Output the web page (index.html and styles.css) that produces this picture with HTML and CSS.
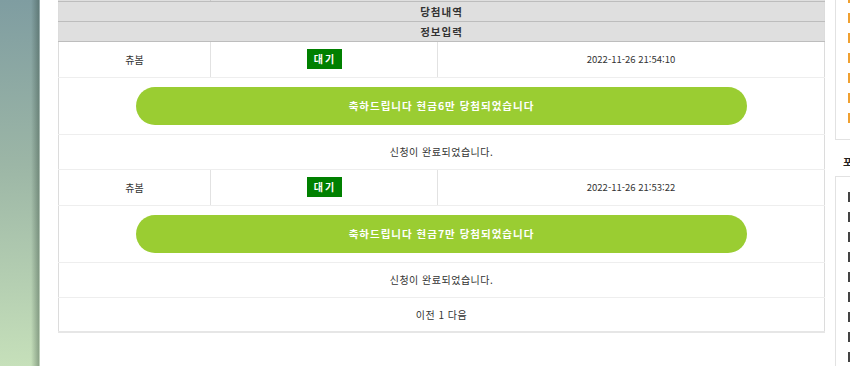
FILE: index.html
```html
<!DOCTYPE html>
<html lang="ko">
<head>
    <meta charset="UTF-8">
    <title>당첨내역</title>
    <link rel="stylesheet" href="styles.css">
</head>
<body>
    <div class="side-bg"></div>
    <div class="page">
        <div class="content">
            <table class="result-table">
                <colgroup>
                    <col class="w-name">
                    <col class="w-state">
                    <col class="w-date">
                </colgroup>
                <tr class="prev-row">
                    <td class="col-name"></td>
                    <td colspan="2"></td>
                </tr>
                <tr class="head-row">
                    <th colspan="3">당첨내역</th>
                </tr>
                <tr class="head-row">
                    <th colspan="3">정보입력</th>
                </tr>

                <tr class="data-row">
                    <td class="col-name">츄봄</td>
                    <td class="col-state"><span class="badge">대기</span></td>
                    <td class="col-date">2022-11-26 21:54:10</td>
                </tr>
                <tr class="prize-row">
                    <td colspan="3"><div class="prize">축하드립니다 현금6만 당첨되었습니다</div></td>
                </tr>
                <tr class="msg-row">
                    <td colspan="3">신청이 완료되었습니다.</td>
                </tr>

                <tr class="data-row">
                    <td class="col-name">츄봄</td>
                    <td class="col-state"><span class="badge">대기</span></td>
                    <td class="col-date">2022-11-26 21:53:22</td>
                </tr>
                <tr class="prize-row">
                    <td colspan="3"><div class="prize">축하드립니다 현금7만 당첨되었습니다</div></td>
                </tr>
                <tr class="msg-row">
                    <td colspan="3">신청이 완료되었습니다.</td>
                </tr>

                <tr class="msg-row">
                    <td colspan="3" class="paging">이전 1 다음</td>
                </tr>
            </table>
        </div>

        <div class="sidebar">
            <div class="side-box top-box">
                <span class="mark orange"></span>
                <span class="mark orange"></span>
                <span class="mark orange"></span>
                <span class="mark orange"></span>
                <span class="mark orange"></span>
                <span class="mark orange"></span>
                <span class="mark orange"></span>
            </div>
            <h3 class="side-title">포</h3>
            <div class="side-box bottom-box">
                <span class="mark dark"></span>
                <span class="mark dark"></span>
                <span class="mark dark"></span>
                <span class="mark dark"></span>
                <span class="mark dark"></span>
                <span class="mark dark"></span>
                <span class="mark dark"></span>
                <span class="mark dark"></span>
                <span class="mark dark"></span>
            </div>
        </div>
    </div>
</body>
</html>
```

FILE: styles.css
```css
* {
    margin: 0;
    padding: 0;
    box-sizing: border-box;
}
body {
    font-family: 'Noto Sans CJK KR', 'DejaVu Sans', sans-serif;
    font-size: 10px;
    color: #333;
    height: 366px;
    overflow: hidden;
    display: flex;
    background: #fff;
}
.side-bg {
    flex: 0 0 40px;
    height: 366px;
    background: linear-gradient(to bottom, #7f9da1 0%, #9cb6a6 45%, #c6e0ba 100%);
    position: relative;
}
.side-bg::after {
    content: "";
    position: absolute;
    top: 0;
    right: 0;
    width: 9px;
    height: 100%;
    background: linear-gradient(to right, rgba(40, 60, 50, 0) 0%, rgba(40, 60, 50, 0.35) 85%, rgba(255, 255, 255, 0.4) 100%);
}
.page {
    flex: 1;
    display: flex;
    padding-left: 18px;
    gap: 10px;
    min-width: 0;
}
.content {
    flex: 0 0 766px;
}
.result-table {
    width: 766px;
    border-collapse: collapse;
    table-layout: fixed;
    border-left: 1px solid #dcdcdc;
    border-right: 1px solid #dcdcdc;
    border-bottom: 2px solid #e6e6e6;
}
.w-name {
    width: 152px;
}
.w-state {
    width: 227px;
}
.w-date {
    width: 387px;
}
.result-table td {
    text-align: center;
    vertical-align: middle;
    border-top: 1px solid #e8e8e8;
    border-bottom: 1px solid #eeeeee;
}
.prev-row td {
    height: 1px;
    border: none;
    border-bottom: 1px solid #bdbdbd;
    background: #dfdfdf;
}
.prev-row .col-name {
    border-right: 1px solid #c8c8c8;
}
.head-row th {
    height: 20px;
    background: #dfdfdf;
    border-bottom: 1px solid #bdbdbd;
    font-weight: bold;
    font-size: 10.5px;
    color: #333;
    letter-spacing: 1px;
}
.col-name {
    border-right: 1px solid #e2e2e2;
}
.col-state {
    border-right: 1px solid #e2e2e2;
}
.col-date {
    font-size: 9.5px;
    color: #333;
}
.data-row td {
    height: 36px;
}
.badge {
    display: inline-block;
    width: 35px;
    height: 20px;
    line-height: 20px;
    background: #008000;
    color: #fff;
    font-weight: bold;
    font-size: 10px;
    letter-spacing: 2px;
    text-indent: 2px;
}
.prize-row td {
    height: 57px;
}
.prize {
    width: 611px;
    height: 38px;
    line-height: 38px;
    margin: 0 auto;
    background: #9acd32;
    border-radius: 19px;
    color: #fff;
    font-weight: bold;
    font-size: 10.5px;
    letter-spacing: 1px;
}
.msg-row td {
    height: 35px;
    letter-spacing: 0.5px;
}
.paging {
    letter-spacing: 1px;
}
.sidebar {
    flex: 0 0 200px;
}
.side-box {
    border: 1px solid #e2e2e2;
    display: flex;
    flex-direction: column;
    gap: 10px;
    padding-left: 12px;
}
.mark {
    display: block;
    width: 8px;
    height: 10px;
}
.top-box {
    height: 151px;
    margin-top: -11px;
    padding-top: 3px;
}
.mark.orange {
    background: #f0a030;
}
.bottom-box {
    height: 200px;
    padding-top: 15px;
}
.mark.dark {
    background: #444;
}
.side-title {
    font-size: 10.5px;
    font-weight: bold;
    padding: 14px 0 0 8px;
    height: 36px;
    color: #222;
}
```
